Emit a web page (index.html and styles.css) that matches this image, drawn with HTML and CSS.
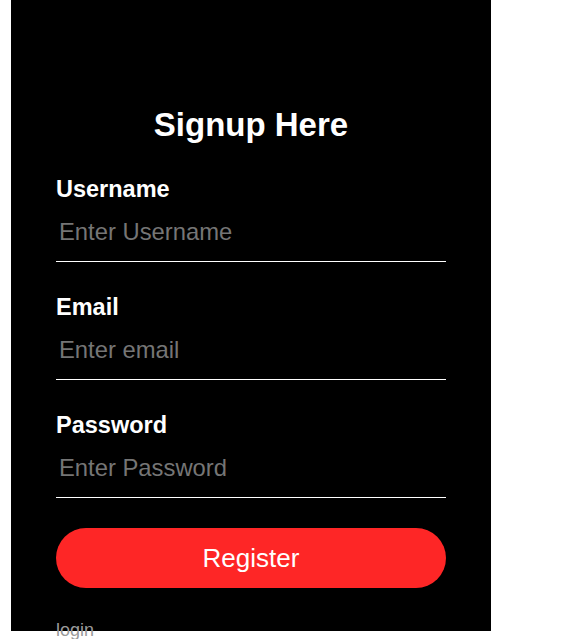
FILE: index.html
```html
<!DOCTYPE html>
<html lang="en">
<head>
<meta charset="utf-8">
<title>Signup</title>
<link rel="stylesheet" href="styles.css">
</head>
<body>
  <div class="box">
    <h1 class="title">Signup Here</h1>
    <form class="form">
      <div class="field">
        <label class="label" for="u">Username</label>
        <input class="input" id="u" type="text" placeholder="Enter Username">
      </div>
      <div class="field">
        <label class="label" for="e">Email</label>
        <input class="input" id="e" type="email" placeholder="Enter email">
      </div>
      <div class="field">
        <label class="label" for="p">Password</label>
        <input class="input" id="p" type="password" placeholder="Enter Password">
      </div>
      <button class="btn" type="button">Register</button>
      <a class="login" href="#">login</a>
    </form>
  </div>
</body>
</html>
```

FILE: styles.css
```css
html, body {
  margin: 0;
  padding: 0;
  background: #fff;
}
body {
  min-height: 639px;
  font-family: "Liberation Sans", Arial, sans-serif;
}
.box {
  margin-left: 11px;
  width: 480px;
  height: 631px;
  box-sizing: border-box;
  padding: 106px 45px 0;
  background: #000;
}
.title {
  margin: 0 0 33px;
  font-size: 33px;
  line-height: 37px;
  font-weight: 700;
  color: #fff;
  text-align: center;
}
.form {
  display: flex;
  flex-direction: column;
}
.field {
  display: flex;
  flex-direction: column;
  margin-bottom: 32px;
}
.field:last-of-type {
  margin-bottom: 30px;
}
.label {
  font-size: 23.5px;
  line-height: 26px;
  font-weight: 700;
  color: #fff;
}
.input {
  box-sizing: border-box;
  width: 100%;
  height: 60px;
  margin: 0;
  padding: 0 3px;
  background: transparent;
  border: none;
  border-bottom: 1px solid #fff;
  outline: none;
  color: #fff;
  font-family: "Liberation Sans", Arial, sans-serif;
  font-size: 23.8px;
  line-height: 26px;
}
.input::placeholder {
  color: #757575;
}
.btn {
  width: 100%;
  height: 60px;
  margin: 0;
  padding: 0;
  border: none;
  border-radius: 30px;
  background: #fe2626;
  color: #fff;
  font-family: "Liberation Sans", Arial, sans-serif;
  font-size: 26px;
  cursor: pointer;
}
.login {
  margin-top: 32px;
  font-size: 18px;
  line-height: 21px;
  color: #9a9a9a;
  text-decoration: none;
}
```
